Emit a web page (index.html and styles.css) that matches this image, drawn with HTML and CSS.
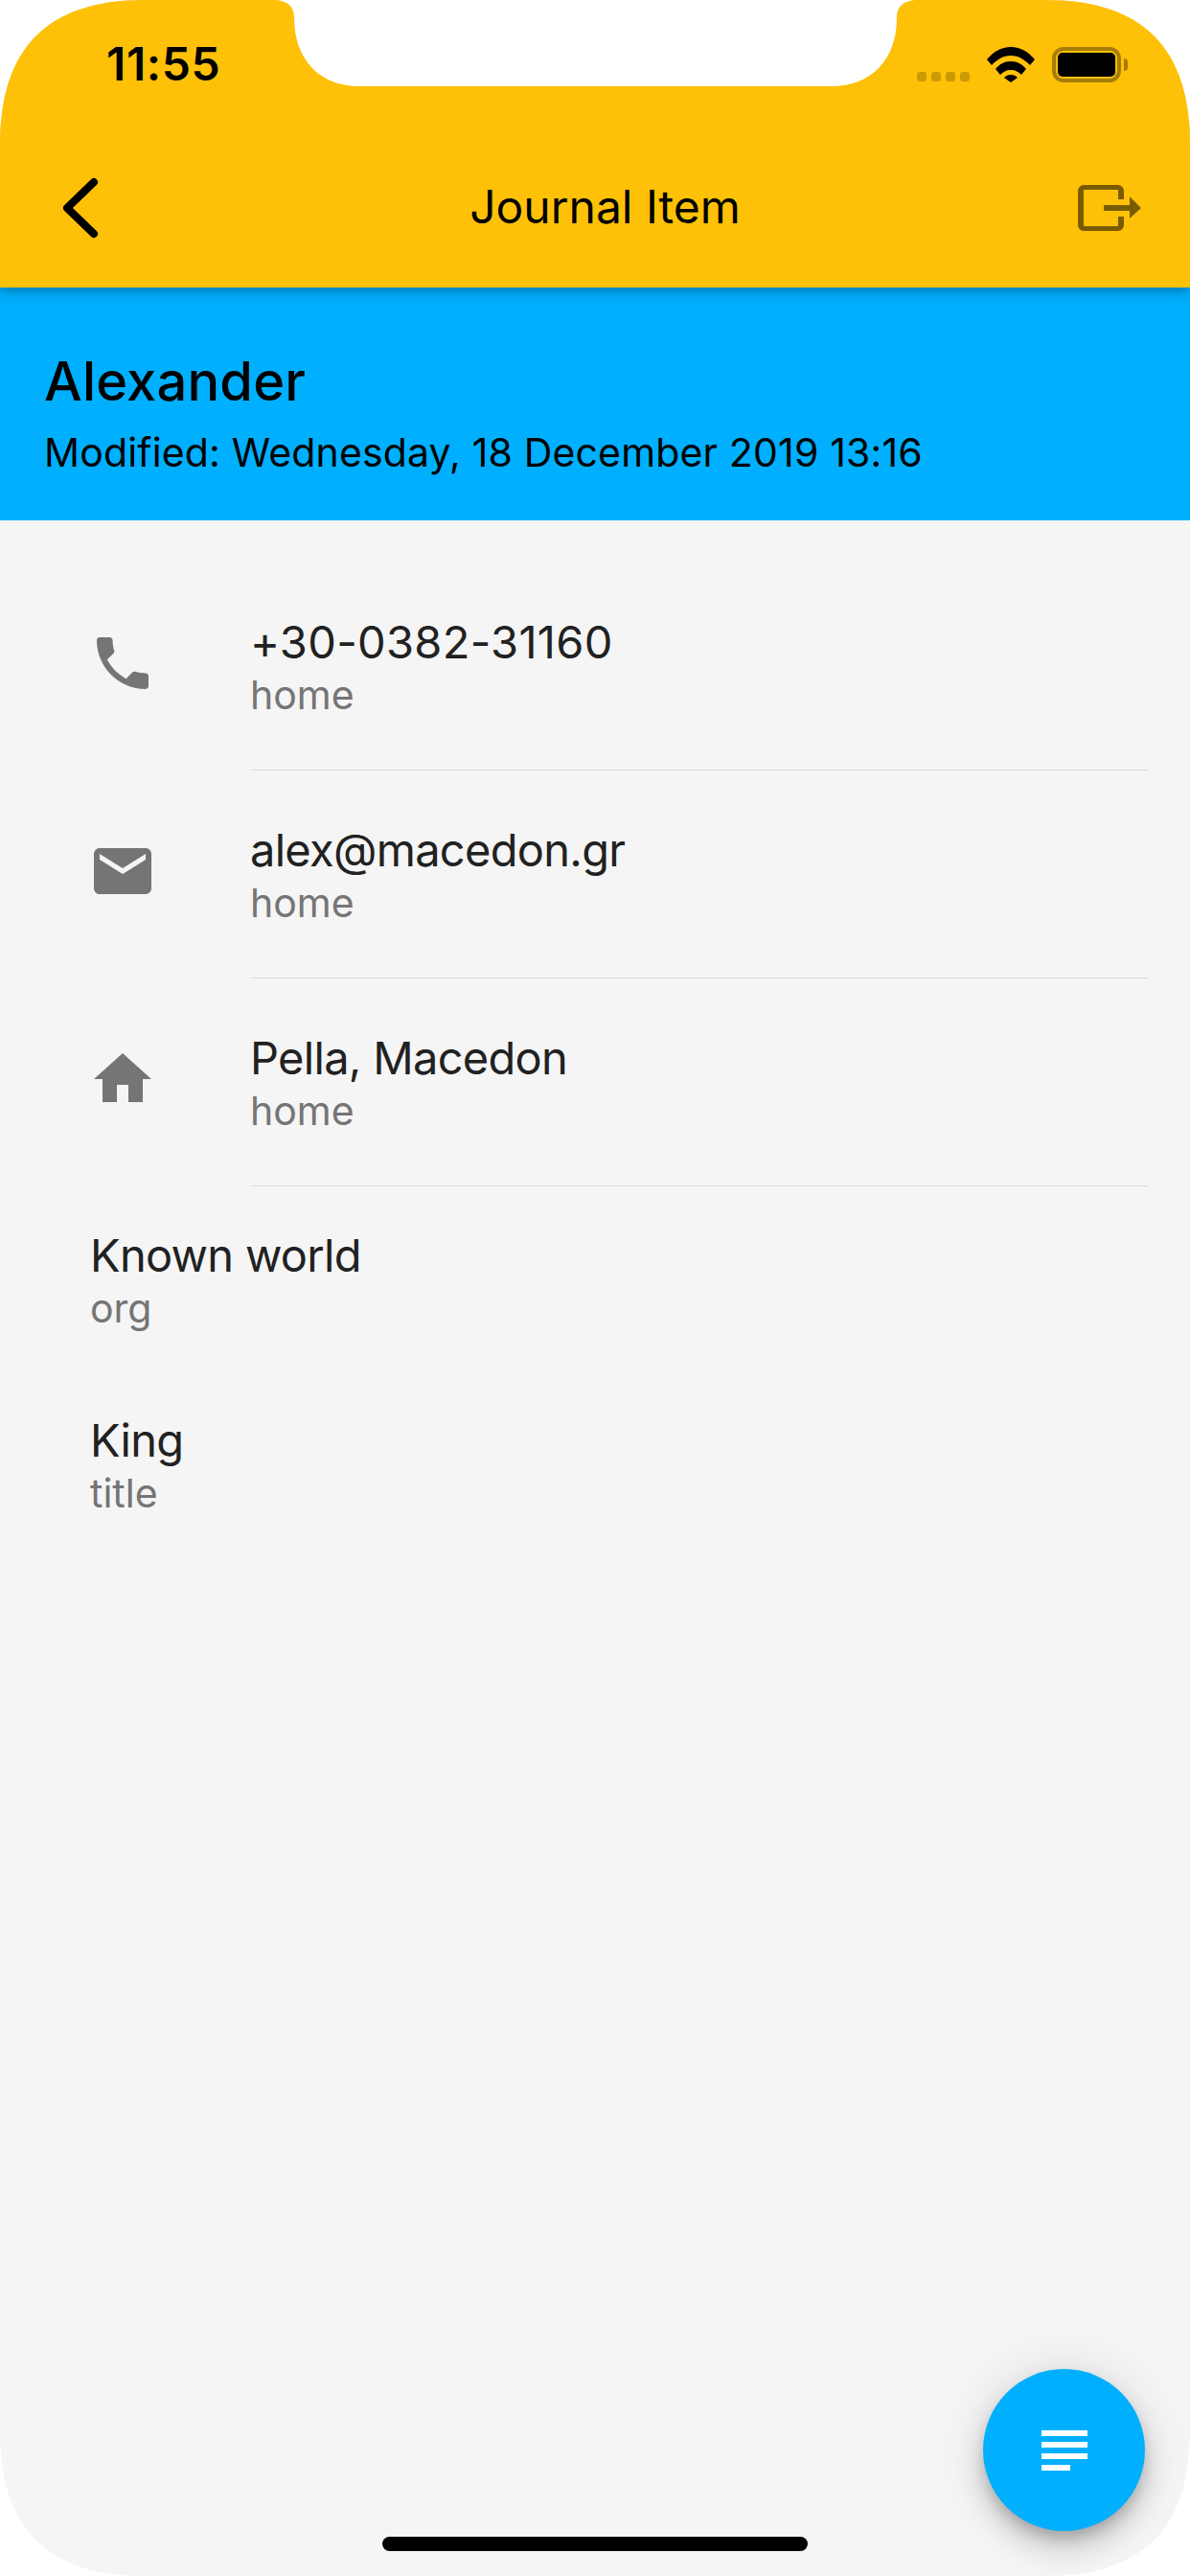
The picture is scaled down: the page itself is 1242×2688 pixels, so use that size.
FILE: index.html
```html
<!DOCTYPE html>
<html lang="en">
<head>
  <meta charset="UTF-8">
  <meta name="viewport" content="width=device-width, initial-scale=1.0">
  <title>Journal Item</title>
  <link rel="stylesheet" href="styles.css">
</head>
<body>
  <div class="screen">
    <!-- Sensor housing, sits over the app bar -->
    <svg class="notch" width="673" height="90" viewBox="0 0 673 90">
      <path d="M0 0C16 0 22 8 22 18C22 62 48 90 91 90H582C625 90 651 62 651 18C651 8 657 0 673 0Z" fill="#fff"/>
    </svg>

    <header class="app-bar">
      <div class="status-bar">
        <span class="time">11:55</span>
        <div class="status-icons">
          <div class="signal">
            <span></span><span></span><span></span><span></span>
          </div>
          <svg class="wifi" width="50" height="37" viewBox="0 0 50 37">
            <path d="M0 13C7 5 15 0 25 0S43 5 50 13L45 19C39 13 33 9 25 9S11 13 5 19Z"/>
            <path d="M9 23C13 18 18 15 25 15S37 18 41 23L36 29C33 26 30 24 25 24S17 26 14 29Z"/>
            <path d="M18 32C20 30 22 29 25 29S30 30 32 32L25 37Z"/>
          </svg>
          <div class="battery">
            <div class="battery-body"><div class="battery-level"></div></div>
            <div class="battery-nub"></div>
          </div>
        </div>
      </div>
      <nav class="nav-row">
        <svg class="back-icon" width="40" height="72" viewBox="0 0 40 72">
          <path d="M35 9L7 36L35 63" fill="none" stroke="#000" stroke-width="8" stroke-linecap="round" stroke-linejoin="round"/>
        </svg>
        <h1 class="nav-title">Journal Item</h1>
        <svg class="exit-icon" width="66" height="48" viewBox="0 0 66 48" fill="#7a5c00">
          <path d="M6 0H42C45 0 48 3 48 6V15H42V5H6V43H42V33H48V42C48 45 45 48 42 48H6C3 48 0 45 0 42V6C0 3 3 0 6 0Z"/>
          <path d="M27 21H54V12L66 24L54 35V27H27Z"/>
        </svg>
      </nav>
    </header>

    <section class="summary">
      <h2 class="summary-name">Alexander</h2>
      <p class="summary-date">Modified: Wednesday, 18 December 2019 13:16</p>
    </section>

    <main class="details">
      <div class="row">
        <svg class="row-icon" viewBox="0 0 24 24"><path d="M6.62 10.79c1.44 2.83 3.76 5.14 6.59 6.59l2.2-2.2c.27-.27.67-.36 1.02-.24 1.12.37 2.33.57 3.57.57.55 0 1 .45 1 1V20c0 .55-.45 1-1 1-9.39 0-17-7.61-17-17 0-.55.45-1 1-1h3.5c.55 0 1 .45 1 1 0 1.25.2 2.45.57 3.57.11.35.03.74-.25 1.02l-2.2 2.2z"/></svg>
        <div class="row-text">
          <div class="row-value phone-number">+30-0382-31160</div>
          <div class="row-label">home</div>
        </div>
      </div>
      <div class="row">
        <svg class="row-icon" viewBox="0 0 24 24"><path d="M20 4H4c-1.1 0-1.99.9-1.99 2L2 18c0 1.1.9 2 2 2h16c1.1 0 2-.9 2-2V6c0-1.1-.9-2-2-2zm0 4l-8 5-8-5V6l8 5 8-5v2z"/></svg>
        <div class="row-text">
          <div class="row-value">alex@macedon.gr</div>
          <div class="row-label">home</div>
        </div>
      </div>
      <div class="row">
        <svg class="row-icon" viewBox="0 0 24 24"><path d="M10 20v-6h4v6h5v-8h3L12 3 2 12h3v8z"/></svg>
        <div class="row-text">
          <div class="row-value">Pella, Macedon</div>
          <div class="row-label">home</div>
        </div>
      </div>

      <div class="plain-row">
        <div class="row-value">Known world</div>
        <div class="row-label">org</div>
      </div>
      <div class="plain-row">
        <div class="row-value">King</div>
        <div class="row-label">title</div>
      </div>
    </main>

    <button class="fab">
      <svg width="72" height="72" viewBox="0 0 24 24" fill="#fff"><path d="M14 17H4v2h10v-2zm6-8H4v2h16V9zM4 15h16v-2H4v2zM4 5v2h16V5H4z"/></svg>
    </button>
    <div class="home-indicator"></div>
  </div>
</body>
</html>
```

FILE: styles.css
```css
html, body {
  margin: 0;
  padding: 0;
  background: #fff;
}

body {
  font-family: Inter, "Liberation Sans", sans-serif;
  color: #000;
}

/* Device outline with continuous corners */
.screen {
  position: relative;
  width: 1242px;
  height: 2688px;
  display: flex;
  flex-direction: column;
  background: #f5f5f5;
  overflow: hidden;
  clip-path: path("M0 150C0 50 50 0 150 0H1092C1192 0 1242 50 1242 150V2538C1242 2638 1192 2688 1092 2688H150C50 2688 0 2638 0 2538Z");
}

.notch {
  position: absolute;
  top: 0;
  left: 285px;
  z-index: 5;
}

/* App bar */
.app-bar {
  position: relative;
  z-index: 2;
  height: 300px;
  background: #ffc107;
  box-shadow: 0 6px 15px rgba(0, 0, 0, 0.2), 0 3px 6px rgba(0, 0, 0, 0.12);
}

.status-bar {
  height: 134px;
  display: flex;
  justify-content: space-between;
  padding: 0 65px 0 111px;
}

.time {
  margin-top: 38px;
  font-size: 48px;
  line-height: 58px;
  font-weight: 600;
  letter-spacing: 0.6px;
}

.status-icons {
  display: flex;
  align-items: flex-start;
  padding-top: 49px;
}

.signal {
  display: flex;
  gap: 5px;
  margin: 26px 18px 0 0;
}

.signal span {
  width: 10px;
  height: 10px;
  border-radius: 3px;
  background: #cc9a06;
}

.wifi {
  margin-right: 18px;
}

.battery {
  display: flex;
  align-items: center;
}

.battery-body {
  box-sizing: border-box;
  width: 72px;
  height: 37px;
  padding: 2px;
  border: 4px solid #a67d04;
  border-radius: 12px;
}

.battery-level {
  height: 100%;
  background: #000;
  border-radius: 5px;
}

.battery-nub {
  width: 4px;
  height: 13px;
  margin-left: 3px;
  background: #a67d04;
  border-radius: 0 7px 7px 0;
}

.nav-row {
  height: 166px;
  display: grid;
  grid-template-columns: 1fr auto 1fr;
  align-items: center;
  padding: 0 51px 0 63px;
}

.exit-icon {
  justify-self: end;
}

.nav-title {
  margin: 0 0 3px 9px;
  font-size: 48px;
  font-weight: 400;
}

/* Blue summary band */
.summary {
  height: 243px;
  box-sizing: border-box;
  padding: 64px 46px 0;
  background: #00b0ff;
}

.summary-name {
  margin: 0;
  font-size: 56px;
  line-height: 68px;
  font-weight: 500;
  letter-spacing: 0.2px;
}

.summary-date {
  margin: 16px 0 0;
  font-size: 41px;
  line-height: 48px;
  letter-spacing: 0.16px;
}

/* Detail rows */
.details {
  padding-top: 44px;
}

.row {
  display: flex;
  align-items: center;
  padding-left: 92px;
}

.row-icon {
  flex: none;
  width: 72px;
  height: 72px;
  margin: 0 97px 7px 0;
  fill: #757575;
}

.row-text {
  flex: 1;
  height: 217px;
  box-sizing: border-box;
  margin-right: 44px;
  padding-top: 55px;
  border-bottom: 1px solid #dcdcdc;
}

.row-value {
  margin-bottom: 3px;
  font-size: 47px;
  line-height: 56px;
  letter-spacing: -0.7px;
  color: #212121;
}

.row-value.phone-number {
  letter-spacing: 0.3px;
}

.row-label {
  font-size: 41px;
  line-height: 48px;
  color: #757575;
}

.plain-row {
  height: 193px;
  box-sizing: border-box;
  padding: 44px 0 0 94px;
}

/* Floating button */
.fab {
  position: absolute;
  left: 1026px;
  top: 2472px;
  width: 169px;
  height: 169px;
  padding: 0;
  display: flex;
  align-items: center;
  justify-content: center;
  border: none;
  border-radius: 50%;
  background: #00b0ff;
  box-shadow: 0 18px 30px rgba(0, 0, 0, 0.14), 0 3px 54px rgba(0, 0, 0, 0.12), 0 9px 15px -3px rgba(0, 0, 0, 0.2);
}

.home-indicator {
  position: absolute;
  left: 399px;
  top: 2647px;
  width: 444px;
  height: 15px;
  border-radius: 8px;
  background: #000;
}
```
